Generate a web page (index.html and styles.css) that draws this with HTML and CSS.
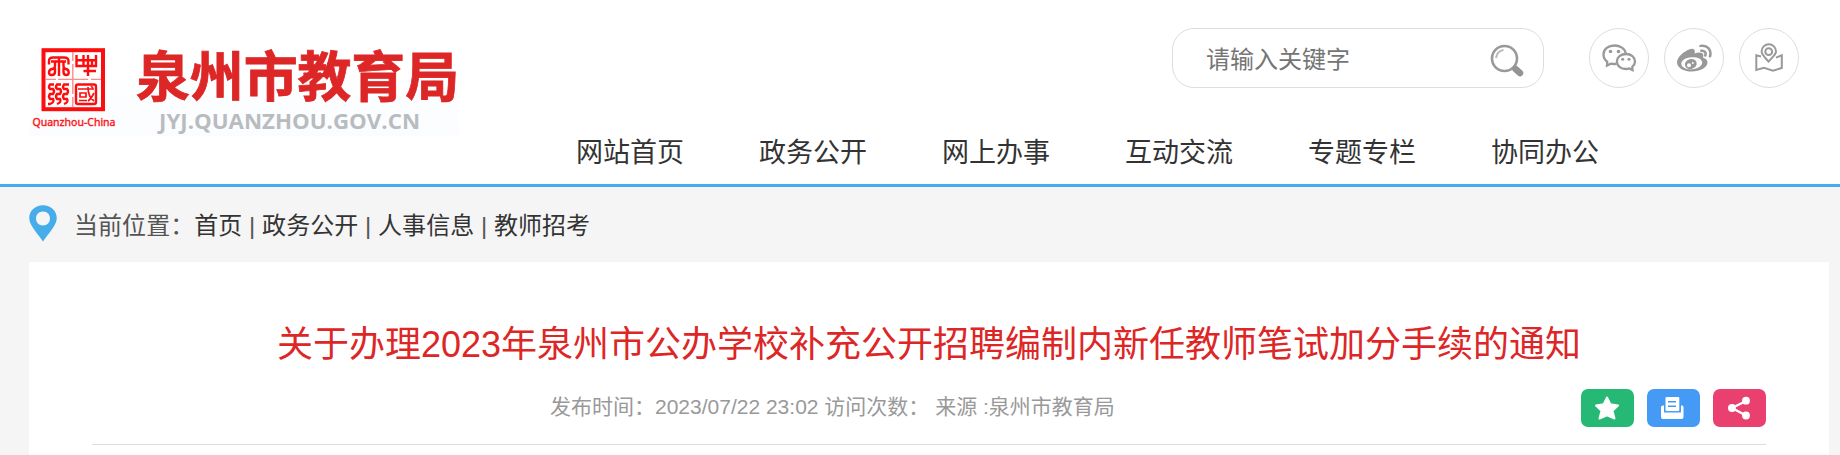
FILE: index.html
```html
<!DOCTYPE html>
<html lang="zh-CN">
<head>
    <meta charset="UTF-8">
    <title>泉州市教育局</title>
    <link rel="stylesheet" href="styles.css">
</head>
<body>
    <div class="header">
        <a class="logo">
            <svg width="434" height="104" viewBox="30 32 434 104">
                <defs>
                    <linearGradient id="logoBg" x1="0" y1="0" x2="0" y2="1">
                        <stop offset="0.3" stop-color="#fff"/>
                        <stop offset="1" stop-color="#fafcff"/>
                    </linearGradient>
                </defs>
                <rect x="30" y="32" width="428" height="104" fill="url(#logoBg)"/>
                <!-- 印章 -->
                <g fill="none" stroke="#fd0d0d" stroke-width="2.4">
                    <rect x="43.5" y="50.2" width="59.5" height="59" stroke-width="4"/>
                    <path d="M46 79.4H56M58 79.4H88M91 79.4H101M72.8 52V61M72.8 64V94M72.8 97V107" stroke="#ff8a8a" stroke-width="1.4"/>
                    <path d="M49 64.500V61Q49 57.500 53 57.500H64Q68.500 57.500 68.500 61V64.500M51 61.500H66M59 57V76M55 62V66Q55 68.500 52 69Q49 69.500 49 72.500Q49 75 51.500 75Q55 75 55 72V68M63.500 62V66Q63.500 68.500 66 69Q68.700 69.500 68.700 72.500Q68.700 75 66.500 75Q63.500 75 63.500 72V68"/>
                    <path d="M76.500 55V66H96V55M76.500 60.300H96M83.500 55V66M88 55V76M83.500 71H96M92 60V66"/>
                    <path d="M54 84.500H50Q48 87 50 89H53Q55 91.500 53 94H50Q48 96.500 50 99H53Q55 102 50 104H48M61 84.500H57Q55 87 57 89H60Q62 91.500 60 94H57Q55 96.500 57 99H60Q62 102 57 104M69 84.500H64Q62 87 64 89H67Q69 91.500 67 94H64Q62 96.500 64 99H67Q69 102 64 104"/>
                    <rect x="76" y="84.500" width="20" height="19.500" rx="2"/>
                    <path d="M78 89H94M80 93H86V97H80ZM79 100.500H87M88 87Q88 97 94 101M94 93Q91 99 88 101M91 86L93 88" stroke-width="1.7"/>
                </g>
                <text class="logo-sub" x="32.5" y="125.500" textLength="83" lengthAdjust="spacingAndGlyphs">Quanzhou-China</text>
                <text class="logo-name" x="136" y="97" textLength="323" lengthAdjust="spacingAndGlyphs">泉州市教育局</text>
                <text class="logo-url" x="159" y="128.500" textLength="261" lengthAdjust="spacingAndGlyphs">JYJ.QUANZHOU.GOV.CN</text>
            </svg>
        </a>
        <div class="header-right">
            <div class="tools">
                <div class="search">
                    <input type="text" placeholder="请输入关键字">
                    <svg width="34" height="34" viewBox="0 0 34 34" fill="none">
                        <circle cx="14.500" cy="14.500" r="12.500" stroke="#999" stroke-width="2.600"/>
                        <path d="M6 14Q7 7 13.500 6" stroke="#bbb" stroke-width="2"/>
                        <path d="M23 23.500L25 25" stroke="#999" stroke-width="3"/>
                        <path d="M25.500 25L30 29" stroke="#949494" stroke-width="6.500" stroke-linecap="round"/>
                    </svg>
                </div>
                <a class="round">
                    <!-- 微信 -->
                    <svg width="36" height="30" viewBox="0 0 36 30" fill="none" stroke="#999" stroke-width="2.300">
                        <path d="M15.500 20.800Q12.500 21.300 9.800 20.600L6 22.500L6.200 18.700Q2.500 16 2.500 11.500C2.500 6 7.500 2.500 13.500 2.500C19 2.500 24 5.500 24.700 10.300"/>
                        <path d="M25.200 11C30 11 34 14 34 18.500Q34 21.500 31.300 23.700L31.500 27L28.300 25.400Q26.500 26 25 26C19.500 26 15.900 22.800 15.900 18.500S19.700 11 25.200 11Z"/>
                        <g fill="#999" stroke="none"><circle cx="9.500" cy="8.500" r="1.800"/><circle cx="17.500" cy="8.500" r="1.800"/><circle cx="21.700" cy="16.300" r="1.500"/><circle cx="28" cy="16.300" r="1.500"/></g>
                    </svg>
                </a>
                <a class="round">
                    <!-- 微博 -->
                    <svg width="36" height="30" viewBox="0 0 36 30">
                        <path fill="#999" fill-rule="evenodd" d="M13 6.500Q17 5 18.500 7Q19.300 8.500 18.500 10.500Q23.500 8.700 26.500 10.300Q28 11.500 27 14.500Q31.500 16 31.500 19.500C31.500 24.500 24 28.500 15.500 28.500C7.500 28.500 1 24.700 1 19.200C1 14 8.500 8 13 6.500ZM15.500 14.200C9.500 14.500 5 17.500 5.300 21C5.600 24.400 10.300 26.700 16 26.300C22 25.900 26.500 22.500 26.200 19.200C25.900 15.900 21.500 13.900 15.500 14.200Z"/>
                        <ellipse cx="14.800" cy="21" rx="6" ry="4.800" fill="#999" transform="rotate(-15 14.800 21)"/>
                        <circle cx="13" cy="22.300" r="2" fill="#fff"/><circle cx="16.800" cy="19.900" r="1" fill="#fff"/>
                        <path d="M24.500 2.900C31 1.500 36 7 34 13.300M25.300 7.800C28.500 7.300 30.300 9.700 29.300 12.500" fill="none" stroke="#999" stroke-width="2.500" stroke-linecap="round"/>
                    </svg>
                </a>
                <a class="round">
                    <!-- 地图 -->
                    <svg width="36" height="30" viewBox="0 0 36 30" fill="none" stroke="#999" stroke-width="2">
                        <path d="M17.500 18.500C13 13.500 10.600 11.500 10.600 8.500A7.200 7.200 0 0 1 25 8.500C25 11.500 22 13.500 17.500 18.500Z"/>
                        <circle cx="17.700" cy="8.700" r="3.400"/>
                        <path d="M10 13.500L5.300 12.200V27L13 24.700L22 27.600L30.800 25V12.200L25 14.700"/>
                    </svg>
                </a>
            </div>
            <div class="nav">
                <a>网站首页</a>
                <a>政务公开</a>
                <a>网上办事</a>
                <a>互动交流</a>
                <a>专题专栏</a>
                <a>协同办公</a>
            </div>
        </div>
    </div>

    <div class="main">
        <div class="position">
            <svg width="28" height="37" viewBox="0 0 23 37" preserveAspectRatio="none">
                <path fill="#47adea" fill-rule="evenodd" d="M11.500 0.200C5 0.200 0.200 5.800 0.200 13C0.200 20 6 27 11.500 36.500C17 27 22.800 20 22.800 13C22.800 5.800 18 0.200 11.500 0.200ZM11.500 6.500C15 6.500 17.200 9.500 17.200 13.500S15 20.500 11.500 20.500S5.800 17.500 5.800 13.500S8 6.500 11.500 6.500Z"/>
            </svg>
            <p>当前位置：<a>首页</a> | <a>政务公开</a> | <a>人事信息</a> | <a>教师招考</a></p>
        </div>
        <div class="article">
            <h1>关于办理2023年泉州市公办学校补充公开招聘编制内新任教师笔试加分手续的通知</h1>
            <div class="info">
                <p>发布时间：2023/07/22 23:02 访问次数： 来源 :泉州市教育局</p>
                <div class="share">
                    <a class="fav">
                        <svg width="53" height="38" viewBox="0 0 53 38"><path d="M26 8.500L29.300 15.300L37 16.500L31.500 21.800L33.500 29.500L26 26.300L18.500 29.500L20.500 21.800L15 16.500L22.700 15.300Z" fill="#fff" stroke="#fff" stroke-width="2" stroke-linejoin="round"/></svg>
                    </a>
                    <a class="print">
                        <svg width="53" height="38" viewBox="0 0 53 38">
                            <path d="M14 18Q14 16.500 16 16.500H17V23H34V16.500H35Q36.500 16.500 36.500 18V28Q36.500 30 34.500 30H16Q14 30 14 28Z" fill="#fff"/>
                            <rect x="18.500" y="8" width="13.800" height="14" rx="1" fill="#fff"/>
                            <path d="M21 12.700H29M21 17.300H29" stroke="#449af5" stroke-width="1.500"/>
                            <path d="M17 23.500H34" stroke="#a5cffa" stroke-width="1.200"/>
                        </svg>
                    </a>
                    <a class="send">
                        <svg width="53" height="38" viewBox="0 0 53 38" fill="#fff"><path d="M33 12L19 19L33 26.500" fill="none" stroke="#fff" stroke-width="2.300"/><circle cx="33" cy="11.700" r="3.900"/><circle cx="19" cy="19" r="4"/><circle cx="33" cy="26.500" r="3.900"/></svg>
                    </a>
                </div>
            </div>
        </div>
    </div>
</body>
</html>
```

FILE: styles.css
```css
*{margin:0;padding:0;box-sizing:border-box}
body{font-family:"Liberation Sans","Noto Sans CJK SC",sans-serif;background:#f5f5f5;color:#333;height:455px;overflow:hidden}
svg{display:block}
.header{display:flex;height:187px;background:#fff;border-bottom:3px solid #47adea}
.logo{padding:32px 0 0 30px;width:576px}
.logo .logo-sub{font-family:"Noto Sans",sans-serif;font-size:11.5px;fill:#fd1515;stroke:#fd1515;stroke-width:.4px}
.logo .logo-name{font-family:"Noto Sans CJK SC",sans-serif;font-size:54px;font-weight:700;fill:#dd2626;stroke:#dd2626;stroke-width:.8px}
.logo .logo-url{font-family:"Open Sans",sans-serif;font-size:21px;font-weight:700;fill:#b9bcbf}
.header-right{flex:1}
.tools{display:flex;justify-content:flex-end;gap:15px;padding:28px 41px 0 0}
.search{display:flex;align-items:center;width:372px;height:60px;border:1px solid #ddd;border-radius:22px;margin-right:30px;padding:0 19px 0 33px}
.search input{flex:1;min-width:0;height:40px;padding-top:3px;border:0;outline:0;background:none;font-family:inherit;font-size:24px;color:#757575}
.search svg{margin-top:6px}
.round{display:flex;align-items:center;justify-content:center;width:60px;height:60px;border:1px solid #ddd;border-radius:50%}
.nav{display:flex;gap:75px;font-size:27px;line-height:40px;margin-top:45px}
.position{display:flex;align-items:center;gap:17px;height:75px;padding:0 0 2px 29px;font-size:24px;color:#555}
.position p{letter-spacing:.05px}
.position a{color:#333}
.article{width:1800px;height:193px;margin-left:29px;padding:0 63px;background:#fff}
.article h1{padding-top:56px;font-size:36px;line-height:54px;font-weight:400;color:#dd2626;text-align:center;white-space:nowrap}
.info{display:flex;justify-content:space-between;height:73px;padding-top:17px;border-bottom:1px solid #ddd}
.info p{padding-left:458px;font-size:21px;line-height:36px;color:#999}
.share{display:flex;gap:13px}
.share a{width:53px;height:38px;border-radius:7px}
.fav{background:#25b975}
.print{background:#449af5}
.send{background:#e94070}
```
